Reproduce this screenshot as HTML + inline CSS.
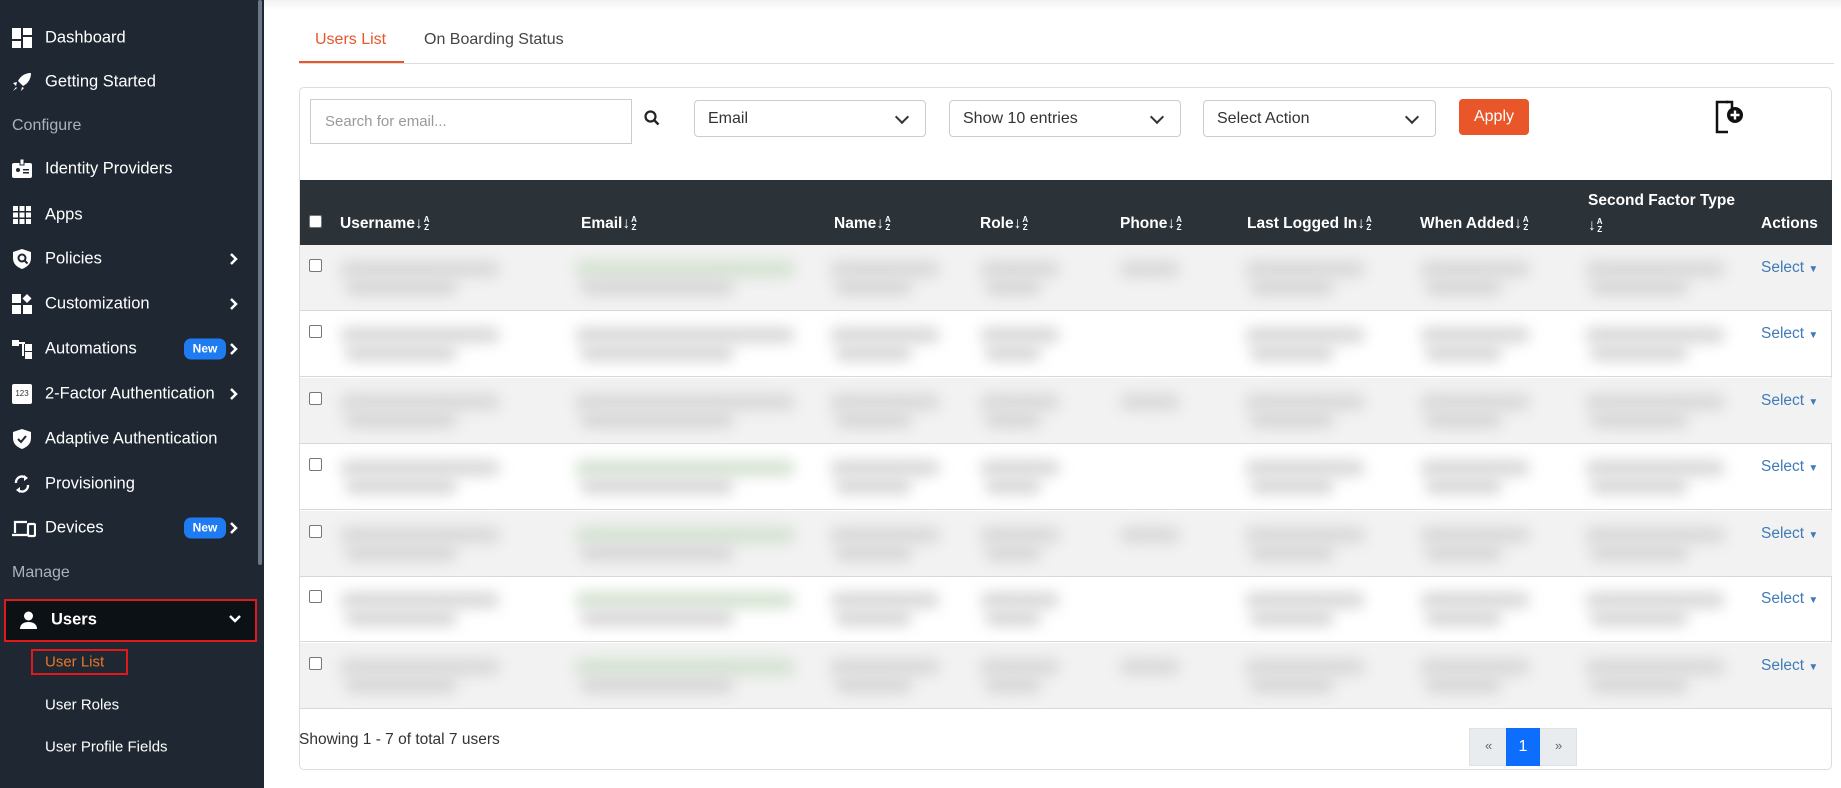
<!DOCTYPE html>
<html><head><meta charset="utf-8"><style>
*{box-sizing:border-box;margin:0;padding:0}
body{width:1841px;height:788px;overflow:hidden;background:#fff;font-family:"Liberation Sans",sans-serif;position:relative}
.sb{position:absolute;left:0;top:0;width:264px;height:788px;background:#1f2832}
.sbar{position:absolute;left:258px;top:0;width:4px;height:565px;background:#6b7784;border-radius:2px}
.it{position:absolute;left:45px;color:#fff;font-size:16.5px;transform:translateY(-50%)}
.ic{position:absolute;left:12px;width:20px;height:20px;transform:translateY(-50%)}
.sec{position:absolute;left:12px;color:#aab2bb;font-size:16px;transform:translateY(-50%)}
.chev{position:absolute;left:229px;transform:translateY(-50%)}
.new{position:absolute;left:184px;width:42px;height:21px;background:#1f7bf2;color:#fff;font-size:12px;font-weight:bold;border-radius:7px;text-align:center;line-height:21px;transform:translateY(-50%)}
.abs{position:absolute}
.sel{position:absolute;top:100px;height:37px;border:1px solid #ccc;border-radius:4px;font-size:16px;color:#333;padding:0 13px;line-height:35px}
.sel:after{content:"";position:absolute;right:18px;top:11px;width:8px;height:8px;border-right:2px solid #333;border-bottom:2px solid #333;transform:rotate(45deg)}
.th{position:absolute;top:224px;color:#fff;font-weight:bold;font-size:15.5px;transform:translateY(-50%);white-space:nowrap}
.az{display:inline-block;vertical-align:middle;font-size:8px;line-height:8px;text-align:center;margin-left:1px}
.row{position:absolute;left:300px;width:1532px;height:66px;border-bottom:1px solid #d8d8d8}
.cb{position:absolute;left:309px;width:13px;height:13px;border:1px solid #777;border-radius:2px;background:#fff}
.bl{position:absolute;height:16px;background:#d6d6d6;filter:blur(7px);border-radius:8px}
.selx{position:absolute;left:1761px;color:#3f7bb8;font-size:15.5px}
</style></head><body>
<div class="sb">
<div class="sbar"></div>
<svg class="ic" style="top:38px" viewBox="0 0 20 20"><rect x="0" y="0" width="9" height="11" fill="#fff"/><rect x="11" y="0" width="9" height="7" fill="#fff"/><rect x="0" y="13" width="9" height="7" fill="#fff"/><rect x="11" y="9" width="9" height="11" fill="#fff"/></svg><div class="it" style="top:38px">Dashboard</div>
<svg class="ic" style="top:82px" viewBox="0 0 20 20"><path d="M19 1C12 1 8 5 6 9l5 5c4-2 8-6 8-13zM5 10l-4 1 3 3zM10 15l-1 4 3-3zM4 15l-3 4 4-3z" fill="#fff"/></svg><div class="it" style="top:82px">Getting Started</div>
<div class="sec" style="top:126px">Configure</div>
<svg class="ic" style="top:169px" viewBox="0 0 20 20"><rect x="0" y="4" width="20" height="15" rx="2" fill="#fff"/><rect x="8" y="0" width="4" height="6" fill="#fff" stroke="#1f2832" stroke-width="1"/><circle cx="6" cy="11" r="2" fill="#1f2832"/><rect x="11" y="10" width="6" height="1.5" fill="#1f2832"/><rect x="11" y="13" width="6" height="1.5" fill="#1f2832"/></svg><div class="it" style="top:169px">Identity Providers</div>
<svg class="ic" style="top:215px" viewBox="0 0 20 20"><g fill="#fff"><rect x="1" y="1" width="5" height="5"/><rect x="7.5" y="1" width="5" height="5"/><rect x="14" y="1" width="5" height="5"/><rect x="1" y="7.5" width="5" height="5"/><rect x="7.5" y="7.5" width="5" height="5"/><rect x="14" y="7.5" width="5" height="5"/><rect x="1" y="14" width="5" height="5"/><rect x="7.5" y="14" width="5" height="5"/><rect x="14" y="14" width="5" height="5"/></g></svg><div class="it" style="top:215px">Apps</div>
<svg class="ic" style="top:259px" viewBox="0 0 20 20"><path d="M10 0L19 3v6c0 6-4 9-9 11C5 18 1 15 1 9V3z" fill="#fff"/><circle cx="10" cy="9" r="3.5" fill="none" stroke="#1f2832" stroke-width="2"/><path d="M12.5 11.5l3 3" stroke="#1f2832" stroke-width="2"/></svg><div class="it" style="top:259px">Policies</div><svg class="chev" style="top:259px" width="10" height="14" viewBox="0 0 10 14"><path d="M2 2l5 5-5 5" fill="none" stroke="#fff" stroke-width="2.5"/></svg>
<svg class="ic" style="top:304px" viewBox="0 0 20 20"><g fill="#fff"><rect x="0" y="0" width="9" height="9"/><rect x="0" y="11" width="9" height="9"/><rect x="11" y="11" width="9" height="9"/><path d="M15 0l4.5 4.5L15 9l-4.5-4.5z"/></g></svg><div class="it" style="top:304px">Customization</div><svg class="chev" style="top:304px" width="10" height="14" viewBox="0 0 10 14"><path d="M2 2l5 5-5 5" fill="none" stroke="#fff" stroke-width="2.5"/></svg>
<svg class="ic" style="top:349px" viewBox="0 0 20 20"><g fill="#fff"><rect x="0" y="1" width="7" height="6"/><rect x="7" y="3" width="6" height="2"/><rect x="10" y="3" width="2" height="14"/><rect x="13" y="5" width="7" height="7"/><rect x="13" y="13" width="7" height="7"/></g></svg><div class="it" style="top:349px">Automations</div><div class="new" style="top:349px">New</div><svg class="chev" style="top:349px" width="10" height="14" viewBox="0 0 10 14"><path d="M2 2l5 5-5 5" fill="none" stroke="#fff" stroke-width="2.5"/></svg>
<div class="ic" style="top:394px;background:#fff;border-radius:2px;font-size:8px;color:#333;text-align:center;line-height:20px">123</div><div class="it" style="top:394px">2-Factor Authentication</div><svg class="chev" style="top:394px" width="10" height="14" viewBox="0 0 10 14"><path d="M2 2l5 5-5 5" fill="none" stroke="#fff" stroke-width="2.5"/></svg>
<svg class="ic" style="top:439px" viewBox="0 0 20 20"><path d="M10 0L19 3v6c0 6-4 9-9 11C5 18 1 15 1 9V3z" fill="#fff"/><path d="M6 10l3 3 5-6" fill="none" stroke="#1f2832" stroke-width="2"/></svg><div class="it" style="top:439px">Adaptive Authentication</div>
<svg class="ic" style="top:484px" viewBox="0 0 20 20"><path d="M4 9a6 6 0 0 1 10-5M16 11a6 6 0 0 1-10 5" fill="none" stroke="#fff" stroke-width="2.4"/><path d="M12 1l4 3-4 3zM8 19l-4-3 4-3z" fill="#fff"/></svg><div class="it" style="top:484px">Provisioning</div>
<svg class="ic" style="top:528px;width:24px" viewBox="0 0 24 20"><path d="M3 15V4h12M0 17h15" fill="none" stroke="#fff" stroke-width="2.2"/><rect x="16" y="6" width="7" height="12" rx="1" fill="none" stroke="#fff" stroke-width="2.2"/></svg><div class="it" style="top:528px">Devices</div><div class="new" style="top:528px">New</div><svg class="chev" style="top:528px" width="10" height="14" viewBox="0 0 10 14"><path d="M2 2l5 5-5 5" fill="none" stroke="#fff" stroke-width="2.5"/></svg>
<div class="sec" style="top:573px">Manage</div>
<div class="abs" style="left:4px;top:599px;width:253px;height:43px;background:#0c1116;border:2px solid #e01a1a"></div>
<svg class="ic" style="top:620px;left:20px;width:17px;height:18px" viewBox="0 0 17 18"><circle cx="8.5" cy="5" r="4.5" fill="#fff"/><path d="M0 18c0-5 4-7 8.5-7s8.5 2 8.5 7z" fill="#fff"/></svg>
<div class="it" style="top:620px;left:51px;font-weight:bold">Users</div>
<svg class="chev" style="top:619px;left:228px" width="14" height="10" viewBox="0 0 14 10"><path d="M2 2l5 5 5-5" fill="none" stroke="#fff" stroke-width="2.5"/></svg>
<div class="abs" style="left:31px;top:649px;width:97px;height:26px;border:2px solid #e01a1a"></div>
<div class="it" style="top:662px;color:#e8762a;font-size:15px">User List</div>
<div class="it" style="top:705px;font-size:15px">User Roles</div>
<div class="it" style="top:747px;font-size:15px">User Profile Fields</div>
</div>

<div class="abs" style="left:264px;top:0;width:1577px;height:10px;background:linear-gradient(#f2f2f2,#fff)"></div>
<div class="abs" style="left:315px;top:31px;color:#e8562a;font-size:16px">Users List</div>
<div class="abs" style="left:424px;top:31px;color:#444;font-size:16px">On Boarding Status</div>
<div class="abs" style="left:299px;top:63px;width:1535px;height:1px;background:#ddd"></div>
<div class="abs" style="left:299px;top:61px;width:105px;height:2px;background:#e8562a"></div>

<div class="abs" style="left:299px;top:87px;width:1533px;height:683px;border:1px solid #ddd;border-radius:5px"></div>
<div class="abs" style="left:310px;top:99px;width:322px;height:45px;border:1px solid #ccc;font-size:15px;color:#999;padding-left:14px;line-height:43px">Search for email...</div>
<svg class="abs" style="left:644px;top:110px" width="16" height="16" viewBox="0 0 16 16"><circle cx="6.5" cy="6.5" r="5" fill="none" stroke="#222" stroke-width="2.2"/><path d="M10 10l4.5 4.5" stroke="#222" stroke-width="2.4"/></svg>
<div class="sel" style="left:694px;width:232px">Email</div>
<div class="sel" style="left:949px;width:232px">Show 10 entries</div>
<div class="sel" style="left:1203px;width:233px">Select Action</div>
<div class="abs" style="left:1459px;top:99px;width:70px;height:36px;background:#e8562a;border-radius:4px;color:#fff;font-size:16px;text-align:center;line-height:36px">Apply</div>
<svg class="abs" style="left:1714px;top:100px" width="32" height="34" viewBox="0 0 32 34"><path d="M14 2H3v30h11" fill="none" stroke="#111" stroke-width="2.5"/><path d="M12 2h6v8" fill="none" stroke="#111" stroke-width="2.5"/><circle cx="21" cy="15" r="8" fill="#111"/><path d="M21 10.5v9M16.5 15h9" stroke="#fff" stroke-width="2.4"/></svg>

<div class="abs" style="left:300px;top:180px;width:1532px;height:65px;background:#2b3238"></div>
<div class="cb" style="top:215px"></div>
<div class="th" style="left:340px">Username↓<span class="az">A<br>Z</span></div>
<div class="th" style="left:581px">Email↓<span class="az">A<br>Z</span></div>
<div class="th" style="left:834px">Name↓<span class="az">A<br>Z</span></div>
<div class="th" style="left:980px">Role↓<span class="az">A<br>Z</span></div>
<div class="th" style="left:1120px">Phone↓<span class="az">A<br>Z</span></div>
<div class="th" style="left:1247px">Last Logged In↓<span class="az">A<br>Z</span></div>
<div class="th" style="left:1420px">When Added↓<span class="az">A<br>Z</span></div>
<div class="th" style="left:1588px;top:201px">Second Factor Type</div>
<div class="th" style="left:1588px;top:226px">↓<span class="az">A<br>Z</span></div>
<div class="th" style="left:1761px">Actions</div>

<div class="row" style="top:245px;background:#f2f2f2"></div>
<div class="row" style="top:311px"></div>
<div class="row" style="top:378px;background:#f2f2f2"></div>
<div class="row" style="top:444px"></div>
<div class="row" style="top:511px;background:#f2f2f2"></div>
<div class="row" style="top:576px"></div>
<div class="row" style="top:643px;background:#f2f2f2"></div>

<div id="rows"></div>
<script>
var tops=[245,311,378,444,511,576,643],h='';
var cols=[[340,160],[575,220],[830,110],[980,80],[1120,60],[1245,120],[1420,110],[1585,140]];
tops.forEach(function(t,i){
 h+='<div class="cb" style="top:'+(t+14)+'px"></div>';
 cols.forEach(function(c,j){
  if(j==4&&i%2==1)return;
  h+='<div class="bl" style="left:'+c[0]+'px;top:'+(t+16)+'px;width:'+c[1]+'px;background:'+(j==1&&i!=1&&i!=2?'#d3e2d0':'#d8d8d8')+'"></div>';
  if(j!=4)h+='<div class="bl" style="left:'+(c[0]+5)+'px;top:'+(t+34)+'px;width:'+(c[1]*0.7)+'px"></div>';
 });
 h+='<div class="selx" style="top:'+(t+14)+'px">Select <span style="font-size:10px">▼</span></div>';
});
document.getElementById('rows').innerHTML=h;
</script>

<div class="abs" style="left:299px;top:731px;color:#333;font-size:15.5px">Showing 1 - 7 of total 7 users</div>
<div class="abs" style="left:1469px;top:728px;width:108px;height:38px;background:#e9ecef;border:1px solid #dee2e6"></div>
<div class="abs" style="left:1485px;top:738px;color:#666;font-size:13px">«</div>
<div class="abs" style="left:1506px;top:728px;width:34px;height:38px;background:#0d6efd;color:#fff;font-size:16px;text-align:center;line-height:38px">1</div>
<div class="abs" style="left:1555px;top:738px;color:#666;font-size:13px">»</div>
</body></html>
